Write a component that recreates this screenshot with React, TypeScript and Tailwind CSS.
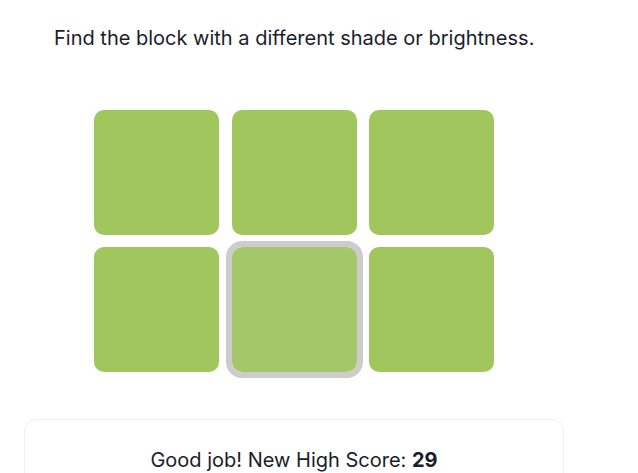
import React from "react";

export default function App() {
  const cells = [0, 1, 2, 3, 4, 5];
  return (
    <div
      className="w-[588px] px-6 bg-white text-[#1c1c2a]"
      style={{ fontFamily: "Inter, 'Noto Sans', sans-serif" }}
    >
      <p className="pt-[24px] pl-[30px] text-[20px] leading-7">
        Find the block with a different shade or brightness.
      </p>
      <div className="mt-[58px] grid grid-cols-[125px_125px_125px] gap-x-[12.5px] gap-y-3 w-fit mx-auto">
        {cells.map((i) =>
          i === 4 ? (
            <div
              key={i}
              className="w-[125px] h-[125px] rounded-[10px] bg-[#a5c76c] outline-[6px] outline-solid outline-[#cccccc]"
            />
          ) : (
            <div key={i} className="w-[125px] h-[125px] rounded-[10px] bg-[#a1c65d]" />
          )
        )}
      </div>
      <div className="mt-[47px] rounded-xl border border-[#f0f1f3] pt-[26px] pb-6 text-center text-[20px] leading-7">
        Good job! New High Score: <span className="font-bold">29</span>
      </div>
    </div>
  );
}
